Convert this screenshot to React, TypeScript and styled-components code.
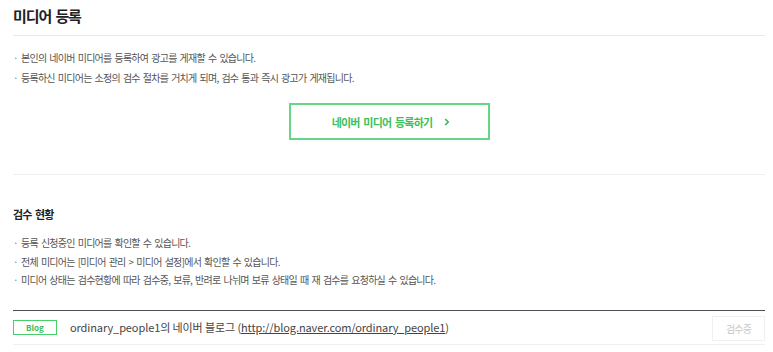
import React from 'react'
import styled, {createGlobalStyle} from 'styled-components'

const GlobalStyle = createGlobalStyle`
  html, body {
    margin: 0;
    padding: 0;
    background: #fff;
  }
  body {
    font-family: "Noto Sans CJK KR", "Noto Sans", sans-serif;
    color: #333;
  }
`

const Page = styled.div`
  width: 752px;
  padding: 0 8px 0 13px;
`

const Header = styled.div`
  height: 35px;
  display: flex;
  align-items: center;
  border-bottom: 1px solid #e6e9ee;
`

const Title = styled.h2`
  margin: -5px 0 0 0;
  font-size: 15px;
  font-weight: 700;
  letter-spacing: -1.1px;
  word-spacing: 2px;
  color: #222;
`

const SubTitle = styled.h3`
  margin: 0;
  font-size: 11px;
  font-weight: 700;
  letter-spacing: -0.9px;
  word-spacing: 2px;
  color: #222;
  line-height: 16px;
`

const Section = styled.section<{$top: number; $bottom: number; $line?: boolean}>`
  padding: ${p => p.$top}px 0 ${p => p.$bottom}px;
  border-bottom: ${p => (p.$line ? '1px solid #eeeff1' : 'none')};
`

const Notes = styled.ul<{$gap: number; $top?: number}>`
  list-style: none;
  margin: ${p => p.$top ?? 0}px 0 0;
  padding: 0;

  li {
    position: relative;
    padding-left: 8px;
    font-size: 10px;
    line-height: ${p => p.$gap}px;
    letter-spacing: -0.75px;
    word-spacing: 1.5px;
    color: #555;
  }

  li::before {
    content: '·';
    position: absolute;
    left: 0;
    top: 0;
    color: #888;
  }
`

const Center = styled.div`
  display: flex;
  justify-content: center;
  margin-top: 15px;
`

const RegisterButton = styled.a`
  box-sizing: border-box;
  width: 201px;
  height: 37px;
  display: flex;
  align-items: center;
  justify-content: center;
  gap: 12px;
  border: 2px solid #66d684;
  background: #fff;
  color: #3cbf5c;
  font-size: 11px;
  font-weight: 700;
  letter-spacing: -0.8px;
  word-spacing: 2px;
  padding: 0 0 0 4px;
  cursor: pointer;

  svg {
    width: 6px;
    height: 8px;
  }
`

const Table = styled.div`
  margin-top: 20px;
  border-top: 1px solid #4a4e55;
`

const Row = styled.div`
  height: 33px;
  display: flex;
  align-items: center;
  border-bottom: 1px solid #eeeff1;
`

const Badge = styled.span`
  box-sizing: border-box;
  width: 44px;
  height: 15px;
  display: flex;
  align-items: center;
  justify-content: center;
  border: 1.5px solid #49cf68;
  color: #39bb57;
  font-size: 8px;
  font-weight: 700;
`

const MediaName = styled.span`
  margin-left: 13px;
  font-size: 11px;
  color: #444;
  letter-spacing: -0.1px;
  flex: 1;

  a {
    color: #444;
    text-decoration: underline;
  }
`

const StatusButton = styled.button`
  width: 53px;
  height: 25px;
  border: 1px solid #f0f0f0;
  background: #fff;
  color: #c8c8c8;
  font-family: inherit;
  font-size: 10px;
  letter-spacing: -0.8px;
  padding: 0;
  margin-top: 2px;
`

function Chevron() {
    return (
        <svg viewBox="0 0 6 8">
            <path d="M1.2 1 L4.2 4 L1.2 7" fill="none" stroke="#31bb53" strokeWidth="1.6"/>
        </svg>
    )
}

export default function App() {
    return (
        <Page>
            <GlobalStyle/>
            <Header>
                <Title>미디어 등록</Title>
            </Header>

            <Section $top={12} $bottom={34} $line>
                <Notes $gap={20}>
                    <li>본인의 네이버 미디어를 등록하여 광고를 게재할 수 있습니다.</li>
                    <li>등록하신 미디어는 소정의 검수 절차를 거치게 되며, 검수 통과 즉시 광고가 게재됩니다.</li>
                </Notes>
                <Center>
                    <RegisterButton>
                        네이버 미디어 등록하기
                        <Chevron/>
                    </RegisterButton>
                </Center>
            </Section>

            <Section $top={31} $bottom={0}>
                <SubTitle>검수 현황</SubTitle>
                <Notes $gap={18.5} $top={12}>
                    <li>등록 신청중인 미디어를 확인할 수 있습니다.</li>
                    <li>전체 미디어는 [미디어 관리 &gt; 미디어 설정]에서 확인할 수 있습니다.</li>
                    <li>미디어 상태는 검수현황에 따라 검수중, 보류, 반려로 나뉘며 보류 상태일 때 재 검수를 요청하실 수 있습니다.</li>
                </Notes>

                <Table>
                    <Row>
                        <Badge>Blog</Badge>
                        <MediaName>
                            ordinary_people1의 네이버 블로그 (<a>http://blog.naver.com/ordinary_people1</a>)
                        </MediaName>
                        <StatusButton>검수중</StatusButton>
                    </Row>
                </Table>
            </Section>
        </Page>
    )
}
